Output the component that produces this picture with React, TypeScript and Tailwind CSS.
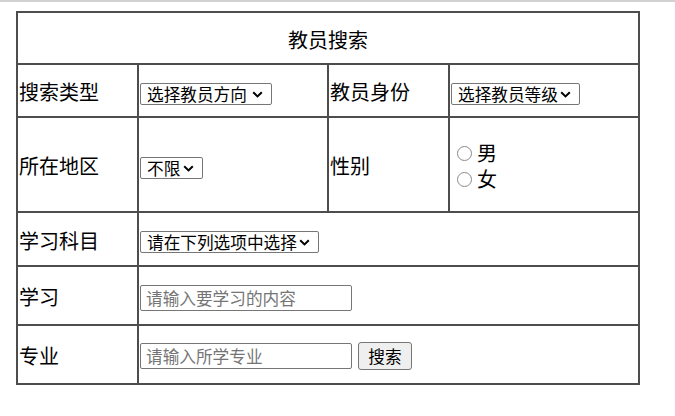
import React from "react";

function Chevron() {
  return (
    <svg
      width="11"
      height="7"
      viewBox="0 0 11 7"
      className="pointer-events-none absolute right-[9px] top-[8px]"
    >
      <path d="M1.2 1.2 L5.5 5.4 L9.8 1.2" fill="none" stroke="#000" strokeWidth="2" />
    </svg>
  );
}

function Select({ label, cls }: { label: string; cls: string }) {
  return (
    <span className="relative inline-flex align-middle">
      <select
        className={`appearance-none ${cls} h-[22px] border border-[#767676] rounded-[2px] bg-white pl-[6px] text-[16.67px] leading-[20px] text-black`}
      >
        <option>{label}</option>
      </select>
      <Chevron />
    </span>
  );
}

function Radio({ label }: { label: string }) {
  return (
    <div className="flex items-center h-[26px]">
      <input
        type="radio"
        name="sex"
        className="appearance-none ml-[6px] mr-[5px] w-[15px] h-[15px] rounded-full border border-[#8a8a8a] bg-white"
      />
      <span className="text-[20px] leading-[26px]">{label}</span>
    </div>
  );
}

const td = "border border-[#4d4d4d] p-[1px] align-middle";

export default function App() {
  return (
    <div className="min-h-[416px] bg-white border-t-2 border-[#d2d2d2] font-['Noto_Sans_CJK_SC',sans-serif] text-black">
      <table className="ml-[16px] mt-[9px] w-[624px] table-fixed border-separate border-spacing-0 border border-[#4d4d4d] text-[20px] leading-[24px]">
        <colgroup>
          <col className="w-[121px]" />
          <col className="w-[190px]" />
          <col className="w-[121px]" />
          <col className="w-[190px]" />
        </colgroup>
        <tbody>
          <tr className="h-[52px]">
            <td colSpan={4} className={`${td} text-center pt-[4px]`}>
              教员搜索
            </td>
          </tr>
          <tr className="h-[53px]">
            <td className={`${td} pt-[4px]`}>搜索类型</td>
            <td className={`${td} pt-[4px]`}>
              <Select label="选择教员方向" cls="w-[132px]" />
            </td>
            <td className={`${td} pt-[4px]`}>教员身份</td>
            <td className={`${td} pt-[4px]`}>
              <Select label="选择教员等级" cls="w-[129px]" />
            </td>
          </tr>
          <tr className="h-[95px]">
            <td className={`${td} pt-[4px]`}>所在地区</td>
            <td className={`${td} pt-[4px]`}>
              <Select label="不限" cls="w-[63px]" />
            </td>
            <td className={`${td} pt-[4px]`}>性别</td>
            <td className={`${td} pt-[4px]`}>
              <Radio label="男" />
              <Radio label="女" />
            </td>
          </tr>
          <tr className="h-[54px]">
            <td className={`${td} pt-[4px]`}>学习科目</td>
            <td colSpan={3} className={`${td} pt-[4px]`}>
              <Select label="请在下列选项中选择" cls="w-[179px]" />
            </td>
          </tr>
          <tr className="h-[59px]">
            <td className={`${td} pt-[4px]`}>学习</td>
            <td colSpan={3} className={`${td} pt-[4px]`}>
              <input
                type="text"
                placeholder="请输入要学习的内容"
                className="align-middle w-[212px] h-[26px] border border-[#767676] rounded-[2px] bg-white px-[5px] text-[16.67px] placeholder:text-[#757575]"
              />
            </td>
          </tr>
          <tr className="h-[59px]">
            <td className={`${td} pt-[4px]`}>专业</td>
            <td colSpan={3} className={`${td} pt-[4px]`}>
              <div className="flex items-center">
                <input
                  type="text"
                  placeholder="请输入所学专业"
                  className="w-[212px] h-[26px] border border-[#767676] rounded-[2px] bg-white px-[5px] text-[16.67px] placeholder:text-[#757575]"
                />
                <button className="ml-[6px] w-[54px] h-[28px] border border-[#767676] rounded-[3px] bg-[#efefef] text-[16.67px] leading-[20px]">
                  搜索
                </button>
              </div>
            </td>
          </tr>
        </tbody>
      </table>
    </div>
  );
}
